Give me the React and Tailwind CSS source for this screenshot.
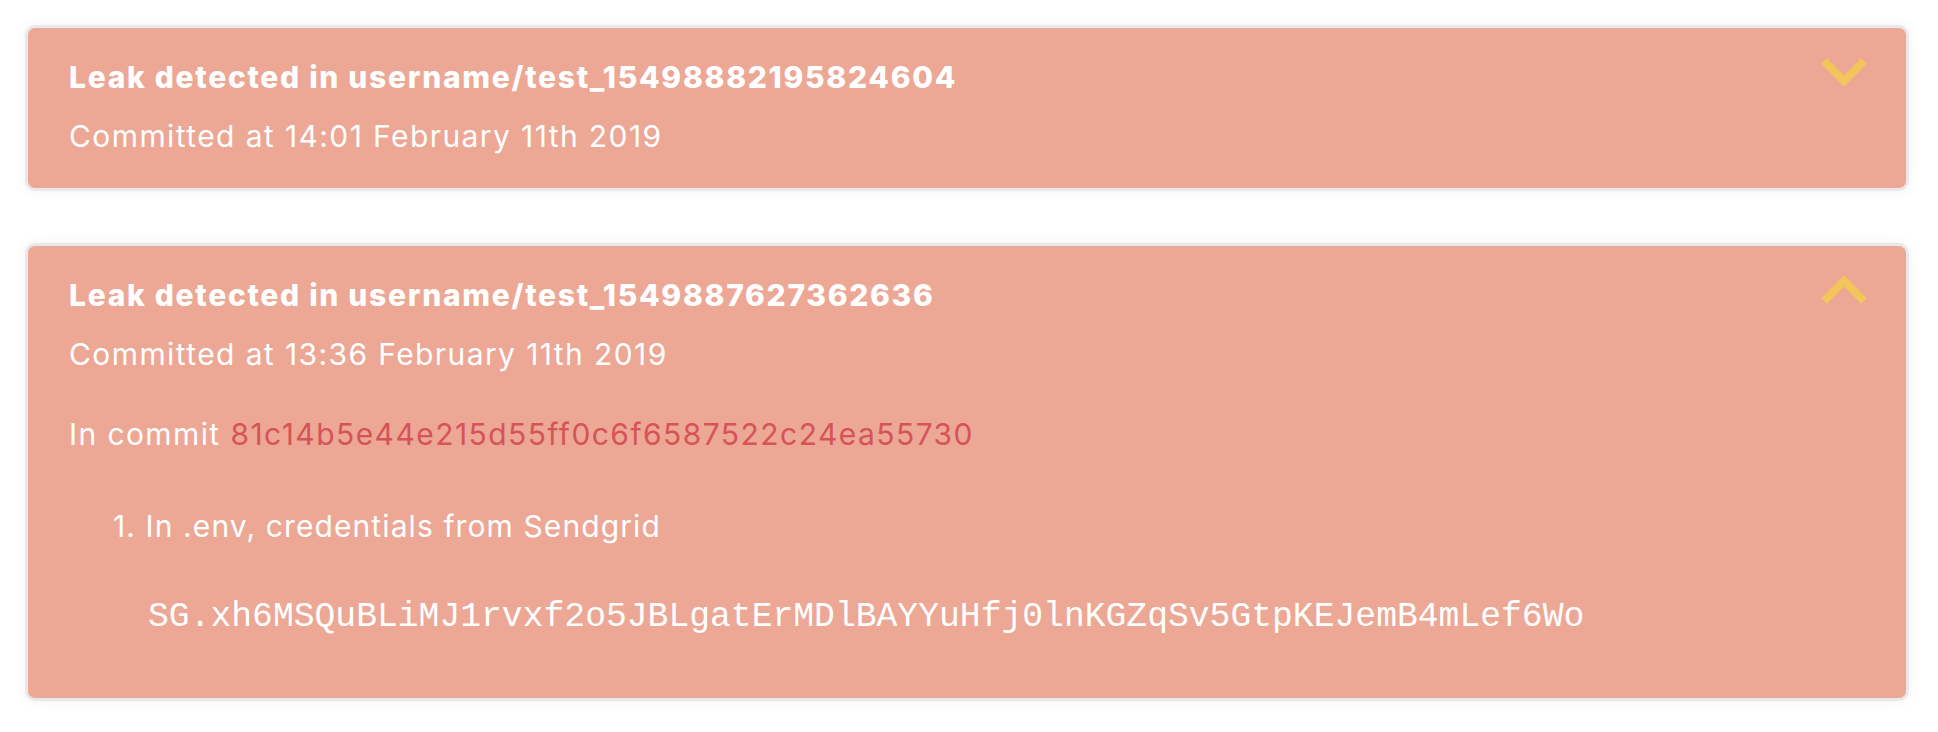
import React from "react";

function Chevron({ up }) {
  return (
    <svg width="52" height="34" viewBox="0 0 52 34" className="absolute right-[36px] top-[27px]" aria-hidden="true">
      <polyline
        points={up ? "6,28 26,8 46,28" : "6,6 26,26 46,6"}
        fill="none"
        stroke="#f3c55b"
        strokeWidth="8"
        strokeLinecap="butt"
        strokeLinejoin="miter"
      />
    </svg>
  );
}

function Card({ title, date, up, children }) {
  return (
    <div className="relative w-[1884px] rounded-[10px] border-[3px] border-[#e9e9e9] bg-[#eca795] pl-[41px] pr-10 pt-[31px] pb-[34px] shadow-[0_0_14px_rgba(0,0,0,0.05)]">
      <Chevron up={up} />
      <div className="text-[30px] leading-[36px] font-extrabold tracking-[1.7px] text-white">{title}</div>
      <div className="mt-[23px] text-[30px] leading-[36px] tracking-[1.4px] text-white">{date}</div>
      {children}
    </div>
  );
}

export default function App() {
  return (
    <div className="min-h-[732px] bg-white pl-[25px] pt-[25px] font-['Inter','Liberation_Sans',sans-serif]">
      <div className="flex flex-col gap-[52px]">
        <Card title="Leak detected in username/test_15498882195824604" date="Committed at 14:01 February 11th 2019" />
        <Card title="Leak detected in username/test_1549887627362636" date="Committed at 13:36 February 11th 2019" up>
          <div className="mt-[44px] text-[30px] leading-[36px] tracking-[1.4px] text-white">
            In commit <span className="tracking-[1.45px] text-[#d65357]">81c14b5e44e215d55ff0c6f6587522c24ea55730</span>
          </div>
          <ol className="mt-[56px] pl-[44px] text-[30px] leading-[36px] tracking-[1.1px] text-white">
            <li>
              <div>1. In .env, credentials from Sendgrid</div>
              <pre className="mt-[53px] mb-[27px] pl-[35px] font-['Liberation_Mono','Courier_New',monospace] text-[34.7px] leading-[40px] tracking-normal text-white">
SG.xh6MSQuBLiMJ1rvxf2o5JBLgatErMDlBAYYuHfj0lnKGZqSv5GtpKEJemB4mLef6Wo
              </pre>
            </li>
          </ol>
        </Card>
      </div>
    </div>
  );
}
